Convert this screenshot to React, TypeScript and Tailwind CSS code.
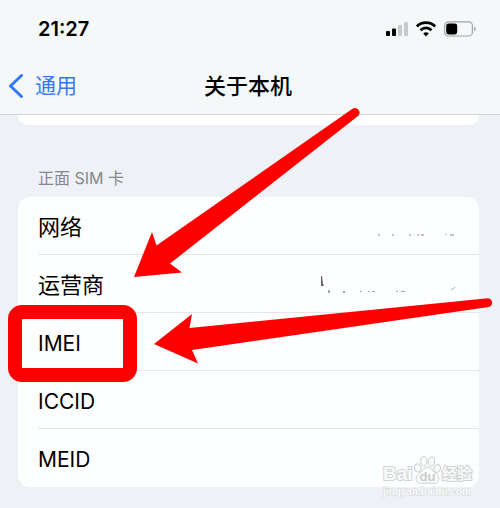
import type { ReactNode } from "react";

type InfoRow = {
  label: string;
  size: string;
  residue?: ReactNode;
  marked?: boolean;
};

const rows: InfoRow[] = [
  { label: "网络", size: "text-[22px]", residue: <NetworkResidue /> },
  { label: "运营商", size: "text-[22px]", residue: <CarrierResidue /> },
  { label: "IMEI", size: "text-[21px]", marked: true },
  { label: "ICCID", size: "text-[21px]" },
  { label: "MEID", size: "text-[21px]" },
];

// What is left of the erased values
function NetworkResidue() {
  return (
    <svg aria-hidden="true" className="mt-5 h-2 w-20" viewBox="0 0 80 8" fill="#c2c2c4">
      <path d="M1 2h2v2H1zM15 2h2v2h-2zM32 2h2v2h-2zM40 2h2v2h-2zM44 2h3v2h-3zM68 2h2v1h-2zM73 2h4v2h-4z" />
    </svg>
  );
}

function CarrierResidue() {
  return (
    <svg aria-hidden="true" className="mt-1 h-5 w-[137px]" viewBox="0 0 137 20" fill="#a8a8aa">
      <path d="M1 0h1l1 8 1 2H1z" fill="#666" />
      <path d="M8 14h2v3H8zM23 15h2v2h-2zM40 15h2v1h-2zM48 15h2v1h-2zM52 15h3v1h-3zM76 15h2v1h-2zM81 15h4v1h-4z" />
      <path d="M131 14l2-1 2-2" fill="none" stroke="#a8a8aa" />
    </svg>
  );
}

function StatusIcons() {
  return (
    <div className="flex items-center gap-2">
      <svg aria-label="信号" role="img" className="h-4 w-[22px]" viewBox="0 0 22 16">
        <rect x="0" y="10" width="4" height="5" rx="1" />
        <rect x="6" y="7.5" width="4" height="7.5" rx="1" />
        <rect x="12" y="4" width="4" height="11" rx="1" fill="#c8cacb" />
        <rect x="18" y="1" width="4" height="14" rx="1" fill="#c8cacb" />
      </svg>
      <svg
        aria-label="无线局域网"
        role="img"
        className="h-4 w-5"
        viewBox="0 0 20 16"
        fill="none"
        stroke="#000"
        strokeWidth="2.8"
      >
        <path d="M.9 5.4a13 13 0 0 1 18.200 0" />
        <path d="M4.5 9.200a7.800 7.800 0 0 1 11 0" />
        <path d="M10 15.400L7.200 12.600a4 4 0 0 1 5.600 0z" fill="#000" stroke="none" />
      </svg>
      <svg aria-label="电池" role="img" className="h-4 w-8" viewBox="0 0 32 16">
        <rect x=".6" y=".8" width="27.8" height="14.2" rx="3.8" fill="none" stroke="#a2a4a5" strokeWidth="1.2" />
        <rect x="2.2" y="2.4" width="11" height="11" rx="2.4" />
        <path d="M30 5.600c2.200.8 2.200 4 0 4.800z" fill="#a2a4a5" />
      </svg>
    </div>
  );
}

function Watermark() {
  return (
    <div className="absolute right-7 bottom-2 w-[89px] font-['Liberation_Sans','Noto_Sans_CJK_SC',sans-serif] font-bold text-[#f9fafa]">
      <div className="flex items-end justify-between">
        <span className="text-[19px] leading-5 [-webkit-text-stroke:2px_#cfd2d3] [paint-order:stroke_fill]">Bai</span>
        <svg aria-hidden="true" className="h-7 w-[27px]" viewBox="0 0 27 28" fill="#fafbfb" stroke="#c8cbcd" strokeWidth="1">
          <ellipse cx="3.800" cy="12" rx="3.200" ry="4.200" transform="rotate(-15 3.8 12)" />
          <ellipse cx="9.800" cy="5.200" rx="3.200" ry="4.600" />
          <ellipse cx="17.500" cy="5.600" rx="3.200" ry="4.600" transform="rotate(10 17.5 5.6)" />
          <ellipse cx="23.200" cy="12.500" rx="3.200" ry="4" transform="rotate(20 23.2 12.5)" />
          <path d="M13.500 11c-3.200 0-4.200 3-7 5.400C3 19 1.200 21.500 2.600 24.800c2 4 7.400 2.200 10.900 2.200s8.900 1.800 10.900-2.200c1.400-3.300-.4-5.800-3.900-8.400-2.800-2.400-3.800-5.400-7-5.400z" />
          <text x="13.5" y="24.5" textAnchor="middle" fontSize="13" fill="#c8cbcd" stroke="none">
            du
          </text>
        </svg>
        <span className="text-[15px] leading-5 [-webkit-text-stroke:2px_#cfd2d3] [paint-order:stroke_fill]">经验</span>
      </div>
      <p className="text-[10px] leading-4 whitespace-nowrap [-webkit-text-stroke:1px_#d3d6d8] [paint-order:stroke_fill]">
        jingyan.baidu.com
      </p>
    </div>
  );
}

function Arrows() {
  return (
    <svg
      aria-hidden="true"
      className="pointer-events-none absolute inset-x-0 top-0 z-10 w-full"
      viewBox="0 0 500 508"
      fill="#fe0000"
    >
      <path d="M134 277L152 232L156.500 245.500L352.500 108.700A4.600 4.600 0 0 1 358.300 115.700L170 263.500L182 272.500Z" />
      <path d="M154 344L192 314L189.500 328L488 298.200A4.500 4.500 0 0 1 488.800 307L192 350L198 363.500Z" />
    </svg>
  );
}

export default function App() {
  return (
    <div className="relative min-h-screen overflow-hidden bg-[#eef1f5] font-['Inter','Noto_Sans_CJK_SC',sans-serif] text-black">
      <header className="border-b border-[#d3d6d9] bg-[#f5f8f9]">
        <div className="flex h-14 items-center justify-between pt-0.5 pr-6 pl-[38px]">
          <time className="text-[20px] font-semibold">21:27</time>
          <StatusIcons />
        </div>
        <nav className="grid h-[58px] grid-cols-[1fr_auto_1fr] items-center pt-0.5 pr-1 pl-2">
          <button type="button" className="flex items-center gap-[11px] text-[21px] text-[#3478f6]">
            <svg aria-hidden="true" className="h-6 w-4" viewBox="0 0 16 24" fill="none" stroke="currentColor" strokeWidth="3" strokeLinecap="round" strokeLinejoin="round">
              <path d="M13.500 1.500L2.500 12L13.500 22.500" />
            </svg>
            通用
          </button>
          <h1 className="pr-2 text-[22px] font-medium">关于本机</h1>
        </nav>
      </header>

      <main className="pr-[21px] pl-[18px]">
        <div className="h-[10px] rounded-b-xl bg-white" />
        <h2 className="flex h-[72px] items-end pb-[7px] pl-5 text-[16px] leading-6 text-[#86888c]">正面 SIM 卡</h2>
        <dl className="rounded-xl bg-[#fdfefe] pl-5">
          {rows.map((row) => (
            <div
              key={row.label}
              className="relative flex h-[58px] items-center justify-between border-b border-[#e3e5e9] pr-[22px] last:border-b-0"
            >
              <dt className={`pt-1 ${row.size}`}>{row.label}</dt>
              <dd>{row.residue}</dd>
              {row.marked && (
                <span
                  aria-hidden="true"
                  className="absolute -top-2 -left-[30px] h-[77px] w-[129px] rounded-[14px] border-[14px] border-[#fe0000]"
                />
              )}
            </div>
          ))}
        </dl>
      </main>

      <Arrows />
      <Watermark />
    </div>
  );
}
